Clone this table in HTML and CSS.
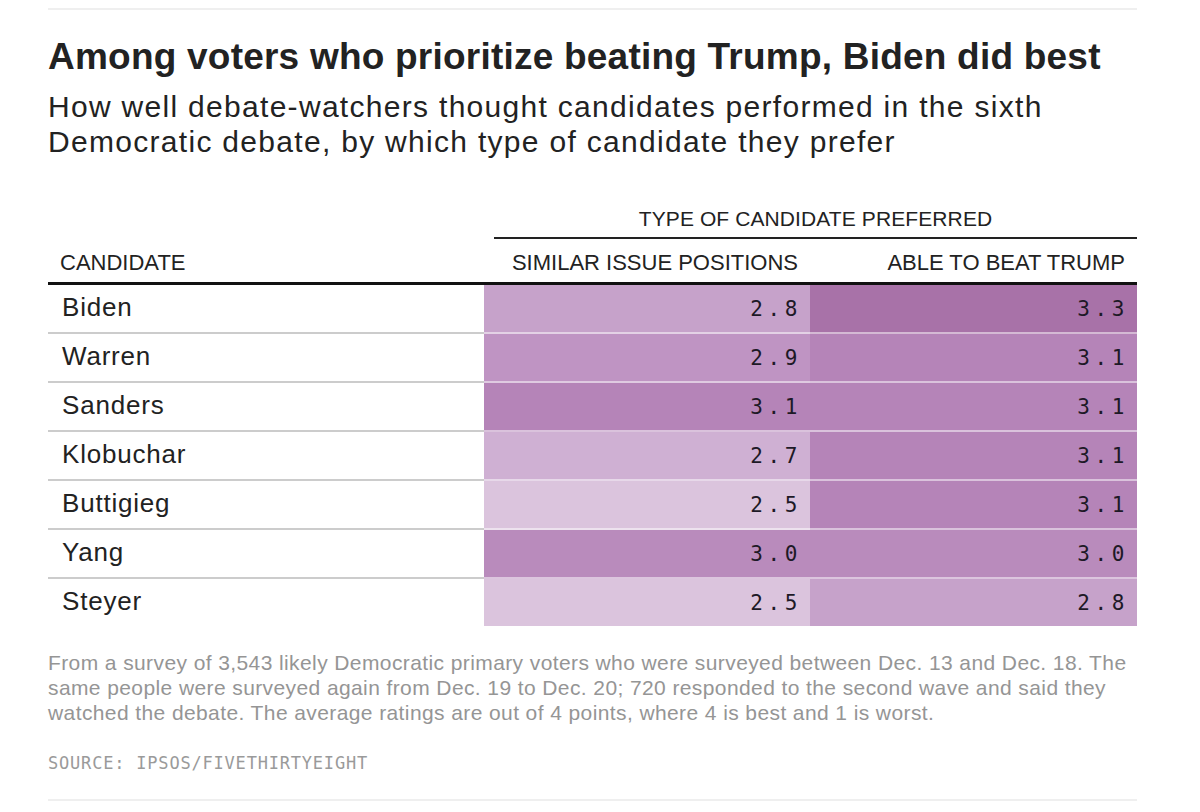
FILE: index.html
```html
<!DOCTYPE html>
<html lang="en">
<head>
<meta charset="utf-8">
<title>Among voters who prioritize beating Trump, Biden did best</title>
<link rel="stylesheet" href="styles.css">
</head>
<body>
<div class="chart">
  <div class="rule"></div>
  <h1 class="title">Among voters who prioritize beating Trump, Biden did best</h1>
  <p class="subtitle">How well debate-watchers thought candidates performed in the sixth<br>Democratic debate, by which type of candidate they prefer</p>

  <div class="table">
    <div class="group-row">
      <div class="group-spacer"></div>
      <div class="group-label">TYPE OF CANDIDATE PREFERRED</div>
    </div>
    <div class="head-row">
      <div class="head name-head">CANDIDATE</div>
      <div class="head num-head">SIMILAR ISSUE POSITIONS</div>
      <div class="head num-head">ABLE TO BEAT TRUMP</div>
    </div>

    <div class="row">
      <div class="name">Biden</div>
      <div class="cell c28">2.8</div>
      <div class="cell c33">3.3</div>
    </div>
    <div class="row">
      <div class="name">Warren</div>
      <div class="cell c29">2.9</div>
      <div class="cell c31">3.1</div>
    </div>
    <div class="row">
      <div class="name">Sanders</div>
      <div class="cell c31">3.1</div>
      <div class="cell c31">3.1</div>
    </div>
    <div class="row">
      <div class="name">Klobuchar</div>
      <div class="cell c27">2.7</div>
      <div class="cell c31">3.1</div>
    </div>
    <div class="row">
      <div class="name">Buttigieg</div>
      <div class="cell c25">2.5</div>
      <div class="cell c31">3.1</div>
    </div>
    <div class="row">
      <div class="name">Yang</div>
      <div class="cell c30">3.0</div>
      <div class="cell c30">3.0</div>
    </div>
    <div class="row last">
      <div class="name">Steyer</div>
      <div class="cell c25">2.5</div>
      <div class="cell c28">2.8</div>
    </div>
  </div>

  <p class="note">From a survey of 3,543 likely Democratic primary voters who were surveyed between Dec. 13 and Dec. 18. The<br>same people were surveyed again from Dec. 19 to Dec. 20; 720 responded to the second wave and said they<br>watched the debate. The average ratings are out of 4 points, where 4 is best and 1 is worst.</p>
  <p class="source">SOURCE: IPSOS/FIVETHIRTYEIGHT</p>
  <div class="rule bottom"></div>
</div>
</body>
</html>
```

FILE: styles.css
```css
* {
  box-sizing: border-box;
}

html, body {
  margin: 0;
  padding: 0;
  background: #ffffff;
}

body {
  font-family: "Liberation Sans", Arial, sans-serif;
  color: #222222;
}

.chart {
  width: 1137px;
  padding: 8px 0 0 48px;
}

.rule {
  height: 2px;
  background: #efefef;
}

.rule.bottom {
  margin-top: 25px;
}

.title {
  margin: 25px 0 0;
  font-size: 37px;
  line-height: 44px;
  font-weight: 700;
  letter-spacing: 0.22px;
  color: #222222;
  white-space: nowrap;
}

.subtitle {
  margin: 10px 0 0;
  font-size: 30px;
  line-height: 35px;
  letter-spacing: 1.3px;
  color: #222222;
  white-space: nowrap;
}

.table {
  margin-top: 48px;
}

.group-row,
.head-row,
.row {
  display: grid;
  grid-template-columns: 436px 326px 327px;
}

.group-label {
  grid-column: 2 / 4;
  margin-left: 10px;
  padding-bottom: 6px;
  border-bottom: 2px solid #222222;
  text-align: center;
  font-size: 21px;
  line-height: 24px;
  letter-spacing: 0.1px;
}

.head-row {
  margin-top: 12px;
  border-bottom: 3px solid #111111;
}

.head {
  font-size: 22px;
  line-height: 24px;
  padding-bottom: 7px;
}

.name-head {
  padding-left: 12px;
}

.num-head {
  text-align: right;
  padding-right: 12px;
}

.row {
  height: 49px;
}

.row.last {
  height: 47px;
}

.name {
  display: flex;
  align-items: center;
  padding: 0 0 3px 14px;
  font-size: 26px;
  letter-spacing: 0.8px;
  border-bottom: 2px solid #cccccc;
}

.cell {
  display: flex;
  align-items: center;
  justify-content: flex-end;
  padding-right: 8px;
  font-family: "DejaVu Sans Mono", "Liberation Mono", monospace;
  font-size: 21px;
  letter-spacing: 4.6px;
  color: #1d1926;
  border-bottom: 2px solid rgba(255, 255, 255, 0.5);
}

.row.last .name,
.row.last .cell {
  border-bottom: none;
}

.c25 { background: #dbc4dd; }
.c27 { background: #cfb0d3; }
.c28 { background: #c6a2ca; }
.c29 { background: #bf94c3; }
.c30 { background: #b98bbc; }
.c31 { background: #b584b8; }
.c33 { background: #a872a8; }

.note {
  margin: 24px 0 0;
  font-size: 21px;
  line-height: 25px;
  letter-spacing: 0.4px;
  color: #959595;
  white-space: nowrap;
}

.source {
  margin: 27px 0 0;
  font-family: "DejaVu Sans Mono", "Liberation Mono", monospace;
  font-size: 17px;
  line-height: 22px;
  letter-spacing: 0.8px;
  color: #9a9a9a;
}
```
